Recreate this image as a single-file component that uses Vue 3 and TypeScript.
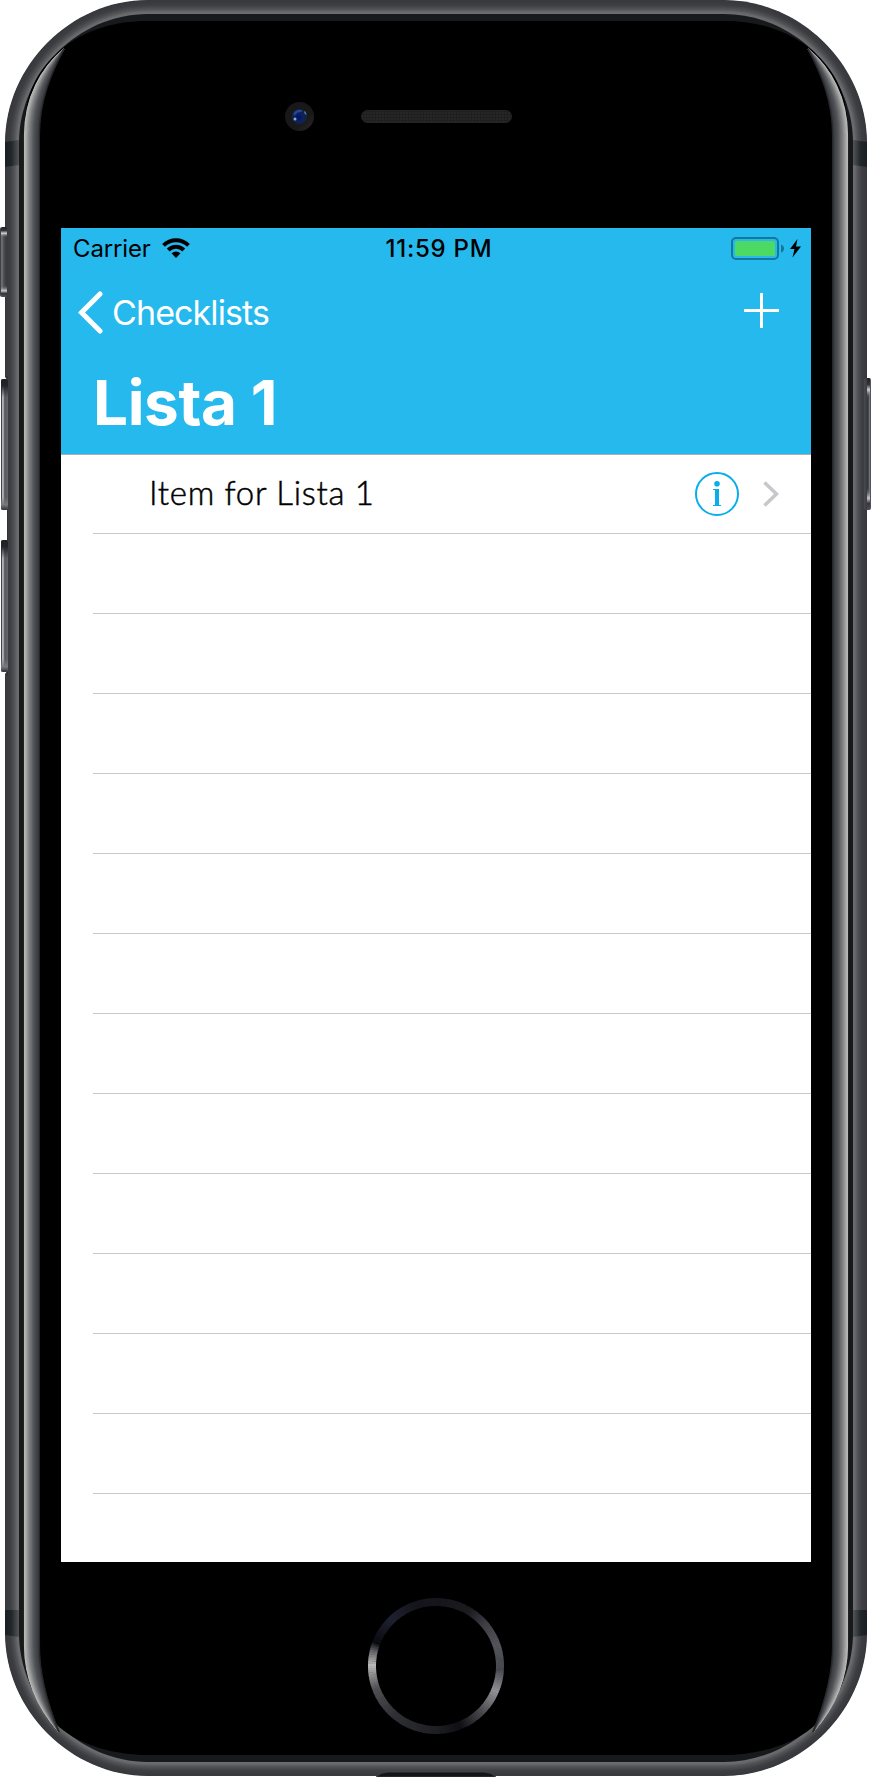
<script setup lang="ts">
type Stop = [number, number[]]

const railStops: Stop[] = [
  [0, [56, 57, 61]],
  [5, [62, 63, 67]],
  [9, [82, 83, 86]],
  [12, [106, 107, 110]],
  [14, [108, 108, 111]],
]
const glossStops: Stop[] = [
  [0, [188, 187, 186]],
  [0.12, [172, 172, 172]],
  [0.35, [128, 129, 131]],
  [0.65, [82, 84, 88]],
  [0.93, [60, 61, 66]],
  [1, [38, 39, 43]],
]
const ringStops: Stop[] = [
  [0, [22, 22, 28]], [30, [27, 27, 32]], [48, [62, 62, 68]], [70, [84, 84, 91]],
  [92, [72, 72, 80]], [112, [146, 146, 150]], [135, [72, 72, 77]], [157, [15, 15, 21]],
  [180, [31, 32, 36]], [220, [48, 49, 54]], [248, [80, 80, 84]], [270, [184, 184, 184]],
  [282, [100, 100, 104]], [290, [10, 10, 16]], [315, [31, 34, 49]], [340, [21, 21, 29]], [360, [22, 22, 28]],
]

function shade(stops: Stop[], at: number): string {
  let i = 1
  while (i < stops.length - 1 && stops[i][0] < at) i++
  const [a, from] = stops[i - 1]
  const [b, to] = stops[i]
  const t = Math.min(1, Math.max(0, (at - a) / (b - a)))
  return `rgb(${from.map((c, k) => Math.round(c + (to[k] - c) * t)).join(',')})`
}

function body(l: number, t: number, r: number, b: number, rad: number): string {
  const k = rad * 0.46
  return `M${l} ${t + rad}C${l} ${t + k} ${l + k} ${t} ${l + rad} ${t}H${r - rad}C${r - k} ${t} ${r} ${t + k} ${r} ${t + rad}V${b - rad}C${r} ${b - k} ${r - k} ${b} ${r - rad} ${b}H${l + rad}C${l + k} ${b} ${l} ${b - k} ${l} ${b - rad}Z`
}

const rails = Array.from({ length: 28 }, (_, n) => {
  const i = n / 2
  return { d: body(5 + i, i, 867 - i, 1776 - i, 143 - i), fill: shade(railStops, i) }
})

const glosses = Array.from({ length: 33 }, (_, n) => {
  const t = n / 32
  const x = 24.5 + 15 * t
  const c = 35 + 11 * t
  return {
    d: `M64 49C${c + 6} ${68 + t * 4} ${x} ${98 + 2 * t} ${x} 135V1646C${x} ${1676 - 2 * t} ${c + 1} ${1706 - 4 * t} 59 1732`,
    stroke: shade(glossStops, t),
  }
})

const ring = Array.from({ length: 180 }, (_, i) => {
  const p = (deg: number) => {
    const a = (deg * Math.PI) / 180
    return `${(436 + 64 * Math.sin(a)).toFixed(2)} ${(1666 - 64 * Math.cos(a)).toFixed(2)}`
  }
  return { d: `M${p(i * 2)}A64 64 0 0 1 ${p(i * 2 + 2.4)}`, stroke: shade(ringStops, i * 2) }
})

const items = ['Item for Lista 1', ...Array<string>(12).fill('')]
</script>

<template>
  <main class="phone">
    <svg class="shell" viewBox="0 0 871 1777" aria-hidden="true">
      <defs>
        <linearGradient id="mute" x1="0" x2="1"><stop offset="0" stop-color="#2c2c30" /><stop offset=".25" stop-color="#77777b" /><stop offset=".55" stop-color="#4b4b50" /><stop offset="1" stop-color="#37373b" /></linearGradient>
        <linearGradient id="volume" x1="0" x2="1"><stop offset="0" stop-color="#2e3035" /><stop offset=".14" stop-color="#55575b" /><stop offset=".2" stop-color="#b0b3b8" /><stop offset=".42" stop-color="#96999d" /><stop offset=".52" stop-color="#55565b" /><stop offset="1" stop-color="#65666b" /></linearGradient>
        <linearGradient id="power" x1="0" x2="1"><stop offset="0" stop-color="#4a4b50" /><stop offset=".6" stop-color="#35363b" /><stop offset=".75" stop-color="#77787c" /><stop offset="1" stop-color="#47484c" /></linearGradient>
        <linearGradient id="cap" x1="0" x2="0" y1="0" y2="1"><stop offset="0" stop-color="#202126" /><stop offset=".05" stop-color="#24252a" /><stop offset=".14" stop-color="#24252a" stop-opacity="0" /><stop offset=".9" stop-color="#77797e" stop-opacity="0" /><stop offset=".96" stop-color="#77797e" /><stop offset="1" stop-color="#303136" /></linearGradient>
        <linearGradient id="ends" x1="0" x2="0" y1="0" y2="1"><stop offset="0" stop-color="#202126" /><stop offset=".05" stop-color="#35363a" /><stop offset=".09" stop-color="#d0d0d4" /><stop offset=".15" stop-color="#55565b" stop-opacity="0" /><stop offset=".83" stop-color="#55565b" stop-opacity="0" /><stop offset=".91" stop-color="#c8c8cc" /><stop offset=".95" stop-color="#35363a" /><stop offset="1" stop-color="#505156" /></linearGradient>
        <linearGradient id="seamL" x1="0" x2="1"><stop offset="0" stop-color="#1a1f24" /><stop offset=".45" stop-color="#20262a" /><stop offset="1" stop-color="#545658" /></linearGradient>
        <linearGradient id="seamR" x1="1" x2="0"><stop offset="0" stop-color="#1a1f24" /><stop offset=".45" stop-color="#20262a" /><stop offset="1" stop-color="#545658" /></linearGradient>
        <radialGradient id="lens" cx=".45" cy=".55"><stop offset="0" stop-color="#00135c" /><stop offset=".5" stop-color="#0a2067" /><stop offset="1" stop-color="#142342" /></radialGradient>
        <linearGradient id="bezel" x1="0" y1="0" x2="1" y2="1"><stop offset="0" stop-color="#171717" /><stop offset=".65" stop-color="#191919" /><stop offset="1" stop-color="#292929" /></linearGradient>
        <pattern id="mesh" width="3" height="3" patternUnits="userSpaceOnUse"><rect width="3" height="3" fill="#262626" /><path d="M0 0H3M0 0V3" stroke="#1a1a1a" /></pattern>
      </defs>
      <path v-for="(r, i) in rails" :key="i" :d="r.d" :fill="r.fill" />
      <path d="M5 142L19 140V165L5 167Z M5 1610H19V1637L5 1635Z" fill="url(#seamL)" />
      <path d="M867 142L853 140V165L867 167Z M867 1610H853V1637L867 1635Z" fill="url(#seamR)" />
      <path :d="body(19, 14, 853, 1762, 129)" fill="#18191b" />
      <path d="M24 135C24 94 36 72 60 50C86 29 116 21 147 21H725C756 21 786 29 812 50C836 72 848 94 848 135V1646C848 1686 832 1709 813 1727C790 1746 756 1755 725 1755H147C116 1755 82 1746 59 1727C40 1709 24 1686 24 1646Z" fill="#000" />
      <g fill="none" stroke-width="1.1">
        <path v-for="(g, i) in glosses" :key="i" :d="g.d" :stroke="g.stroke" />
        <g transform="translate(872 0) scale(-1 1)">
          <path v-for="(g, i) in glosses" :key="i" :d="g.d" :stroke="g.stroke" />
        </g>
      </g>
      <path d="M5 377L7 380V671L5 674Z" fill="#fff" />
      <rect x="7" y="376" width="1" height="300" fill="#303136" />
      <rect x="0" y="227" width="7" height="70" rx="2" fill="url(#mute)" />
      <rect x="1" y="227" width="6" height="70" rx="2" fill="url(#ends)" />
      <rect x="1" y="379" width="7" height="131" rx="2" fill="url(#volume)" />
      <rect x="1" y="379" width="7" height="131" rx="2" fill="url(#cap)" />
      <rect x="1" y="540" width="7" height="132" rx="2" fill="url(#volume)" />
      <rect x="1" y="540" width="7" height="132" rx="2" fill="url(#cap)" />
      <rect x="864" y="378" width="7" height="132" rx="2" fill="url(#power)" />
      <rect x="867" y="378" width="3" height="132" rx="1" fill="url(#ends)" />
      <circle cx="299.5" cy="116.5" r="14.5" fill="url(#bezel)" />
      <circle cx="299.5" cy="116.5" r="7.6" fill="url(#lens)" />
      <path d="M294.5 114Q296.5 110.5 301 111" fill="none" stroke="#29468e" stroke-width="2.2" stroke-linecap="round" />
      <circle cx="295" cy="119" r="1.5" fill="#8ba6cf" /><path d="M304.5 111.5L306 114.5" stroke="#4f86a6" stroke-width="1.4" />
      <rect x="361" y="110" width="151" height="13" rx="6.5" fill="url(#mesh)" />
      <path v-for="(s, i) in ring" :key="i" :d="s.d" :stroke="s.stroke" stroke-width="8" fill="none" />
      <path d="M376 1777Q381 1772 388 1772H484Q491 1772 496 1777Z" fill="#151517" stroke="#4c4d50" stroke-width=".7" />
    </svg>

    <section class="screen">
      <header class="header">
        <div class="status">
          <div class="network">
            <span class="carrier">Carrier</span>
            <svg width="28" height="20" viewBox="0 0 28 20">
              <g fill="none" stroke="#000" stroke-width="4">
                <path d="M1.5 7.3C8.5 .4 19.5 .4 26.5 7.3" /><path d="M6.2 12C10.6 7.7 17.4 7.7 21.8 12" />
              </g>
              <path d="M9.5 15.3Q14 11.6 18.5 15.3L14 20Z" />
            </svg>
          </div>
          <time class="time">11:59 PM</time>
          <svg class="battery" width="71" height="24" viewBox="0 0 71 24">
            <rect x="1" y="1" width="46" height="21" rx="4" fill="none" stroke="#14789a" stroke-width="2" />
            <rect x="4" y="4" width="40" height="15" rx="1.5" fill="#4cd964" />
            <path d="M50 7.5Q53 8.5 53 11.5Q53 14.5 50 15.5Z" fill="#14789a" />
            <path d="M66.5 2L59 12H63.5L61.5 20.5L70 9.5H65Z" fill="#000" />
          </svg>
        </div>
        <nav class="nav">
          <a class="back">
            <svg width="25" height="43" viewBox="0 0 25 43"><path d="M22 3L3.5 21.5L22 40" fill="none" stroke="#fff" stroke-width="5" stroke-linecap="round" stroke-linejoin="miter" /></svg>
            <span>Checklists</span>
          </a>
          <svg class="add" width="35" height="35" viewBox="0 0 35 35"><path d="M17.5 0V35M0 17.5H35" stroke="#fff" stroke-width="3" /></svg>
        </nav>
        <h1 class="title">Lista 1</h1>
      </header>
      <ul class="list">
        <li v-for="(item, i) in items" :key="i" class="row">
          <template v-if="item">
            <span class="label">{{ item }}</span>
            <svg class="info" width="44" height="44" viewBox="0 0 44 44">
              <circle cx="22" cy="22" r="21" fill="none" stroke="#08aeeb" stroke-width="2" />
              <circle cx="22" cy="11.7" r="2.8" fill="#08aeeb" />
              <path d="M18 17H24V33H26V34H18V33H20V18H18Z" fill="#08aeeb" />
            </svg>
            <svg class="chevron" width="16" height="26" viewBox="0 0 16 26"><path d="M1.5 1.5L13.5 13L1.5 24.5" fill="none" stroke="#c7c7cc" stroke-width="3.6" /></svg>
          </template>
        </li>
      </ul>
    </section>
  </main>
</template>

<style>
body {
  background: #fff;
}
</style>

<style scoped>
.phone {
  position: relative;
  box-sizing: border-box;
  width: 871px;
  height: 1777px;
  padding: 228px 60px 215px 61px;
  overflow: hidden;
  font-family: Inter, 'Liberation Sans', sans-serif;
}
.shell {
  position: absolute;
  inset: 0;
  width: 871px;
  height: 1777px;
}
.screen {
  position: relative;
  width: 750px;
  height: 1334px;
  overflow: hidden;
  background: #fff;
}
.header {
  height: 226px;
  background: #25b9ee;
  border-bottom: 1px solid #a9afb3;
}
.status {
  display: grid;
  grid-template-columns: 1fr auto 1fr;
  align-items: center;
  height: 40px;
  padding: 2px 9px 0 12px;
  box-sizing: border-box;
  font-size: 24px;
  line-height: 38px;
}
.network {
  display: flex;
  align-items: center;
  gap: 11px;
}
.network svg {
  margin-bottom: 2px;
}
.carrier {
  width: 78px;
  font-weight: 400;
  letter-spacing: -0.15px;
}
.time {
  padding-left: 3px;
  font-weight: 500;
  letter-spacing: 0.75px;
}
.battery {
  justify-self: end;
}
.nav {
  display: flex;
  align-items: center;
  justify-content: space-between;
  height: 88px;
  padding: 0 32px 0 17px;
  color: #fff;
  font-size: 34px;
}
.back {
  display: flex;
  align-items: center;
  gap: 9px;
  font-weight: 400;
  letter-spacing: -0.9px;
}
.add {
  margin-bottom: 3px;
}
.title {
  margin: 0;
  padding: 1px 0 0 32px;
  color: #fff;
  font-size: 62px;
  font-weight: 700;
  line-height: 92px;
  letter-spacing: -0.4px;
}
.list {
  margin: 0;
  padding: 0 0 0 32px;
  list-style: none;
}
.row {
  display: flex;
  align-items: center;
  box-sizing: border-box;
  height: 80px;
  padding: 0 32px 0 56px;
  border-bottom: 1px solid #c8c7cc;
}
.row:first-child {
  height: 79px;
}
.label {
  flex: 1;
  padding-bottom: 4px;
  font-family: Lato, sans-serif;
  font-size: 33px;
  font-weight: 300;
  letter-spacing: 0.7px;
  color: #000;
  -webkit-text-stroke: 0.5px #000;
}
.info {
  margin-right: 24px;
}
</style>
